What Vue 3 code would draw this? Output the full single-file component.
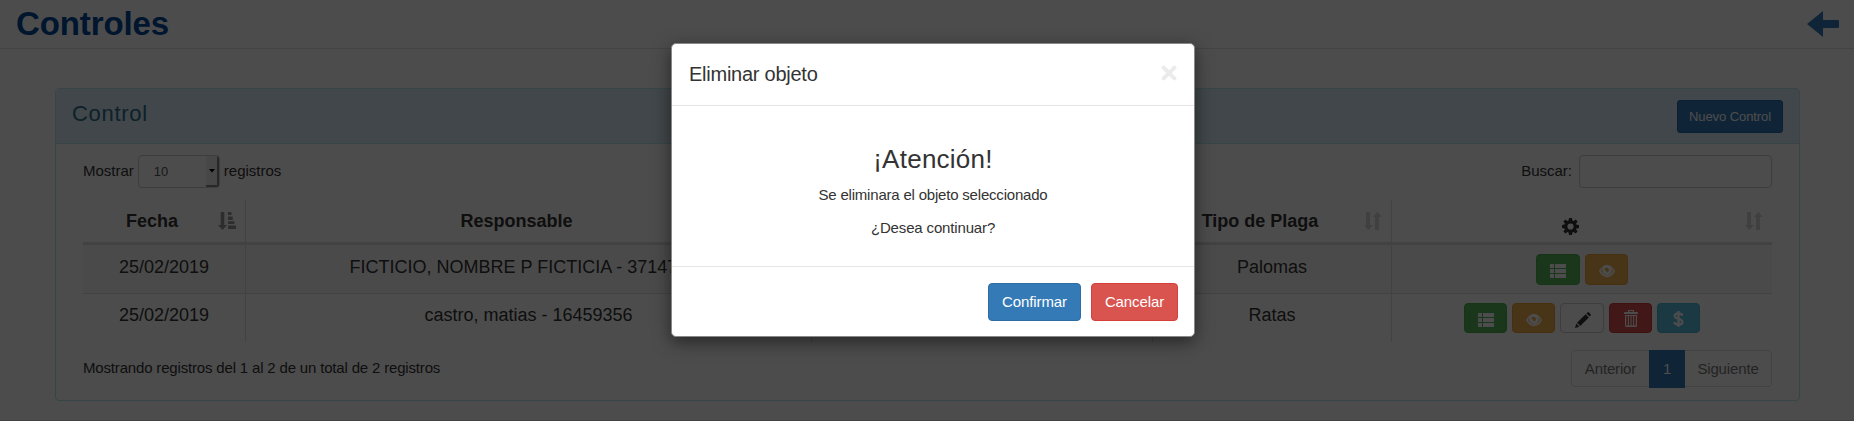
<script setup>
const list = { name: 'list', cls: 'success' }
const eye = { name: 'eye', cls: 'warning' }
const rows = [
  { date: '25/02/2019', who: 'FICTICIO, NOMBRE P FICTICIA - 37147000', pest: 'Palomas', actions: [list, eye] },
  {
    date: '25/02/2019', who: 'castro, matias - 16459356', pest: 'Ratas',
    actions: [list, eye, { name: 'pencil', cls: 'default' }, { name: 'trash', cls: 'danger' }, { name: 'usd', cls: 'info' }],
  },
]
</script>

<template>
  <div class="page">
    <header class="top">
      <h1>Controles</h1>
      <svg class="back" viewBox="0 0 32 26"><path d="M0 13 16 0V9H31Q32 9 32 10V16Q32 17 31 17H16V26Z" /></svg>
    </header>

    <section class="panel">
      <div class="panel-head">
        <h2>Control</h2>
        <button class="new">Nuevo Control</button>
      </div>
      <div class="panel-body">
        <div class="tools">
          <label class="len">
            <span class="t-most">Mostrar</span>
            <span class="select"><span>10</span><i><svg viewBox="0 0 6 4"><path d="M0 0H6L3 3.6Z" /></svg></i></span>
            <span class="t-reg">registros</span>
          </label>
          <label class="search"><span>Buscar:</span><input type="text" /></label>
        </div>

        <div class="table">
          <div class="tr head">
            <div class="th"><span>Fecha</span>
              <svg class="sort on" viewBox="0 0 18 18"><path d="M2.7 0H6.3V13H9L4.5 18 0 13H2.7ZM10 0H13.5V3H10ZM10 4.4H14.7V8H10ZM10 9.2H16.4V12H10ZM10 13.4H18V17H10Z" /></svg>
            </div>
            <div class="th"><span>Responsable</span></div>
            <div class="th"></div>
            <div class="th"><span>Tipo de Plaga</span>
              <svg class="sort" viewBox="0 0 18 18"><path d="M2 0H6V13H9L4.3 18 0 13H2ZM13.3 0 17.8 5H15V18H11V5H8.8Z" /></svg>
            </div>
            <div class="th">
              <svg class="gear" viewBox="0 0 17 17"><path fill-rule="evenodd" d="M7 0H10L10.4 2.5 11.7 3 13.7 1.5 15.6 3.4 14.1 5.4 14.6 6.7 17 7V10L14.6 10.4 14.1 11.6 15.6 13.6 13.6 15.6 11.6 14.1 10.4 14.6 10 17H7L6.6 14.6 5.4 14.1 3.4 15.6 1.4 13.6 2.9 11.6 2.4 10.4 0 10V7L2.4 6.6 2.9 5.4 1.4 3.4 3.4 1.4 5.4 2.9 6.6 2.4ZM8.5 5.4A3.1 3.1 0 1 0 8.5 11.6 3.1 3.1 0 1 0 8.5 5.4Z" /></svg>
              <svg class="sort" viewBox="0 0 18 18"><path d="M2 0H6V13H9L4.3 18 0 13H2ZM13.3 0 17.8 5H15V18H11V5H8.8Z" /></svg>
            </div>
          </div>
          <div v-for="(r, i) in rows" :key="i" class="tr row">
            <div class="td">{{ r.date }}</div>
            <div class="td">{{ r.who }}</div>
            <div class="td"></div>
            <div class="td">{{ r.pest }}</div>
            <div class="td acts">
              <button v-for="a in r.actions" :key="a.name" class="act" :class="a.cls">
                <svg v-if="a.name === 'list'" viewBox="0 0 16 16"><path d="M0 1H4V5H0ZM5 1H16V5H5ZM0 6H4V10H0ZM5 6H16V10H5ZM0 11H4V15H0ZM5 11H16V15H5Z" /></svg>
                <svg v-else-if="a.name === 'eye'" viewBox="0 0 16 16"><path fill-rule="evenodd" d="M0 8C2 4 5 1.7 8 1.7S14 4 16 8C14 12.2 11 14.2 8 14.2S2 12.2 0 8ZM2 8C3.5 11 5.8 12.4 8 12.4S12.5 11 14 8C13.5 6.6 12.8 5.6 11.8 4.8A4.6 4.6 0 1 1 4.2 4.8C3.2 5.6 2.5 6.6 2 8ZM6 5.2C5.2 6 5.6 7.4 6.7 7.5 7.5 7.6 7.8 8.4 7.1 9.2 8.6 9.7 10 8.7 10 7.2 10 5 7.6 4 6 5.2Z" /></svg>
                <svg v-else-if="a.name === 'pencil'" viewBox="0 0 16 16"><path d="M0 16 1.3 11.6 4.4 14.7ZM2 10.8 10.6 2.2 13.8 5.4 5.2 14ZM11.4 1.4 12.5.4Q13.2-.2 14 .5L15.5 2Q16.2 2.8 15.6 3.5L14.6 4.6Z" /></svg>
                <svg v-else-if="a.name === 'trash'" class="trash" viewBox="0 0 14 17"><path fill-rule="evenodd" d="M4 2V.8Q4 0 5 0H9Q10 0 10 .8V2H13Q14 2 14 3V4H0V3Q0 2 1 2ZM5.2 2H8.8V1.1H5.2ZM1 5H13V15.5Q13 17 11.5 17H2.5Q1 17 1 15.5ZM2.2 6V15.6H3.9V6ZM4.9 6V15.6H6.5V6ZM7.5 6V15.6H9.1V6ZM10.1 6V15.6H11.8V6Z" /></svg>
                <svg v-else class="usd" viewBox="0 0 11 16"><path d="M9.3 4.9C9 3.2 7.6 2.5 5.5 2.5 3.3 2.5 1.8 3.3 1.8 4.9 1.8 8.6 9.4 6.9 9.4 10.9 9.4 12.8 7.7 13.5 5.5 13.5 3.1 13.5 1.6 12.6 1.4 10.8M5.5 0V16" /></svg>
              </button>
            </div>
          </div>
        </div>

        <div class="foot">
          <span class="info-text">Mostrando registros del 1 al 2 de un total de 2 registros</span>
          <div class="pager"><span class="prev">Anterior</span><span class="cur">1</span><span class="next">Siguiente</span></div>
        </div>
      </div>
    </section>
    <div class="page-end"></div>

    <div class="overlay">
      <div class="modal">
        <div class="m-head">
          <h4>Eliminar objeto</h4>
          <svg class="close" viewBox="0 0 16 16"><path d="M2.6 2.6 13.4 13.4M13.4 2.6 2.6 13.4" /></svg>
        </div>
        <div class="m-body">
          <h3>¡Atención!</h3>
          <p class="p1">Se eliminara el objeto seleccionado</p>
          <p class="p2">¿Desea continuar?</p>
        </div>
        <div class="m-foot">
          <button class="ok">Confirmar</button>
          <button class="no">Cancelar</button>
        </div>
      </div>
    </div>
  </div>
</template>

<style>
body { margin: 0; overflow: hidden; }
</style>

<style scoped>
* { box-sizing: border-box; }
h1, h2, h3, h4, p { margin: 0; font-weight: 400; }
button { font: inherit; margin: 0; padding: 0; white-space: nowrap; }
.page { position: relative; width: 1854px; height: 421px; display: flex; flex-direction: column; background: #fff; color: #333; font: 15px/20px "Liberation Sans", Arial, sans-serif; overflow: hidden; }
.top { height: 49px; flex: none; border-bottom: 1px solid #e3e3e3; display: flex; justify-content: space-between; padding: 0 15px 0 16px; }
h1 { font-size: 33px; line-height: 48px; font-weight: 700; color: #00489c; letter-spacing: -.1px; }
.back { width: 32px; height: 26px; margin-top: 11px; fill: #337ab7; }
.panel { margin: 39px 54px 0 55px; height: 313px; flex: none; border: 1px solid #bce8f1; border-radius: 4px; }
.panel-head { height: 55px; background: #d9edf7; border-bottom: 1px solid #bce8f1; border-radius: 3px 3px 0 0; display: flex; justify-content: space-between; padding: 11px 16px 0; }
h2 { font-size: 22px; line-height: 28px; color: #31708f; letter-spacing: .7px; }
.new { width: 106px; height: 33px; background: #337ab7; border: 1px solid #2e6da4; border-radius: 3px; color: #fff; font-size: 13px; letter-spacing: -.07px; }
.panel-body { padding: 11px 27px 0; }
.tools { display: flex; justify-content: space-between; height: 45px; }
.len, .search { display: flex; height: 33px; line-height: 31px; }
.select { width: 82px; height: 33px; margin: 0 4px 0 4px; border: 1px solid #ccc; border-radius: 4px; display: flex; justify-content: space-between; overflow: hidden; padding-left: 15px; font-size: 13px; color: #555; line-height: 32px; }
.select i { width: 13px; background: #efefef; border-right: 2px solid #888; border-bottom: 2px solid #888; display: flex; align-items: center; padding-left: 3px; }
.select svg { width: 6px; height: 4px; fill: #000; }
.search input { width: 193px; height: 33px; margin-left: 7px; border: 1px solid #ccc; border-radius: 4px; background: #fff; }
.tr { display: grid; grid-template-columns: 163px 566px 341px 239px 380px; font-size: 18px; text-align: center; }
.tr > div { border-right: 1px solid #ddd; min-width: 0; white-space: nowrap; }
.tr > div:last-child { border-right: 0; }
.head { height: 45px; border-bottom: 3px solid #ddd; font-weight: 700; }
.th { position: relative; padding: 11px 32px 0 8px; }
.sort { position: absolute; right: 9px; top: 12px; width: 18px; height: 18px; opacity: .2; fill: #333; }
.sort.on { opacity: .5; }
.gear { width: 17px; height: 17px; margin-top: 7px; fill: #333; }
.row { height: 48px; }
.row:nth-child(2) { height: 49px; background: #f9f9f9; border-bottom: 1px solid #ddd; }
.td { padding-top: 12px; }
.row:nth-child(3) .td { padding-top: 11px; }
.td.acts, .row:nth-child(3) .td.acts { padding-top: 9px; display: flex; justify-content: center; gap: 5px; }
.act { width: 43.2px; height: 31px; border: 1px solid; border-radius: 4px; display: flex; align-items: center; justify-content: center; padding: 3px 0 0 1px; }
.row:nth-child(3) .act { height: 30px; }
.act svg { width: 16px; height: 16px; fill: #fff; }
.act svg.trash { width: 14px; height: 17px; margin-top: -3px; }
.act svg.usd { width: 11px; height: 16px; margin-top: -2px; fill: none; stroke: #fff; stroke-width: 2.3; }
.success { background: #5cb85c; border-color: #4cae4c; }
.warning { background: #f0ad4e; border-color: #eea236; }
.default { background: #fff; border-color: #ccc; }
.act.default svg { fill: #333; }
.danger { background: #d9534f; border-color: #d43f3a; }
.info { background: #5bc0de; border-color: #46b8da; }
.foot { display: flex; justify-content: space-between; padding-top: 8px; }
.info-text { line-height: 35px; letter-spacing: -.17px; }
.pager { display: flex; width: 201px; height: 37px; border: 1px solid #ddd; border-radius: 4px; color: #777; line-height: 36px; text-align: center; letter-spacing: -.15px; }
.prev { width: 77px; }
.cur { width: 36px; height: 38px; margin-top: -1px; background: #337ab7; color: #fff; line-height: 38px; }
.next { flex: 1; }
.page-end { margin-top: 19px; height: 1px; flex: none; background: #e6dcde; }
.overlay { position: absolute; inset: 0; background: rgba(0, 0, 0, .7); }
.modal { width: 524px; height: 294px; margin: 43px 0 0 671px; background: #fff; border: 1px solid #888; border-radius: 5px; box-shadow: 0 5px 17px rgba(0, 0, 0, .5); }
.m-head { height: 62px; border-bottom: 1px solid #e5e5e5; display: flex; justify-content: space-between; padding: 17px 17px 0 17px; }
h4 { font-size: 20px; line-height: 26px; letter-spacing: -.25px; }
.close { width: 16px; height: 16px; margin-top: 4px; stroke: #ebebeb; stroke-width: 4; stroke-linecap: round; }
.m-body { height: 161px; border-bottom: 1px solid #e5e5e5; text-align: center; padding-top: 38px; }
h3 { font-size: 26px; line-height: 30px; letter-spacing: .25px; }
.p1 { margin-top: 11px; letter-spacing: -.2px; }
.p2 { margin-top: 13px; letter-spacing: -.15px; }
.m-foot { display: flex; justify-content: flex-end; gap: 10px; padding: 16px 16px 0 0; }
.m-foot button { height: 38px; color: #fff; border-radius: 4px; }
.ok { width: 93px; background: #337ab7; border: 1px solid #2e6da4; letter-spacing: -.1px; }
.no { width: 87px; background: #d9534f; border: 1px solid #d43f3a; letter-spacing: -.1px; }
</style>
